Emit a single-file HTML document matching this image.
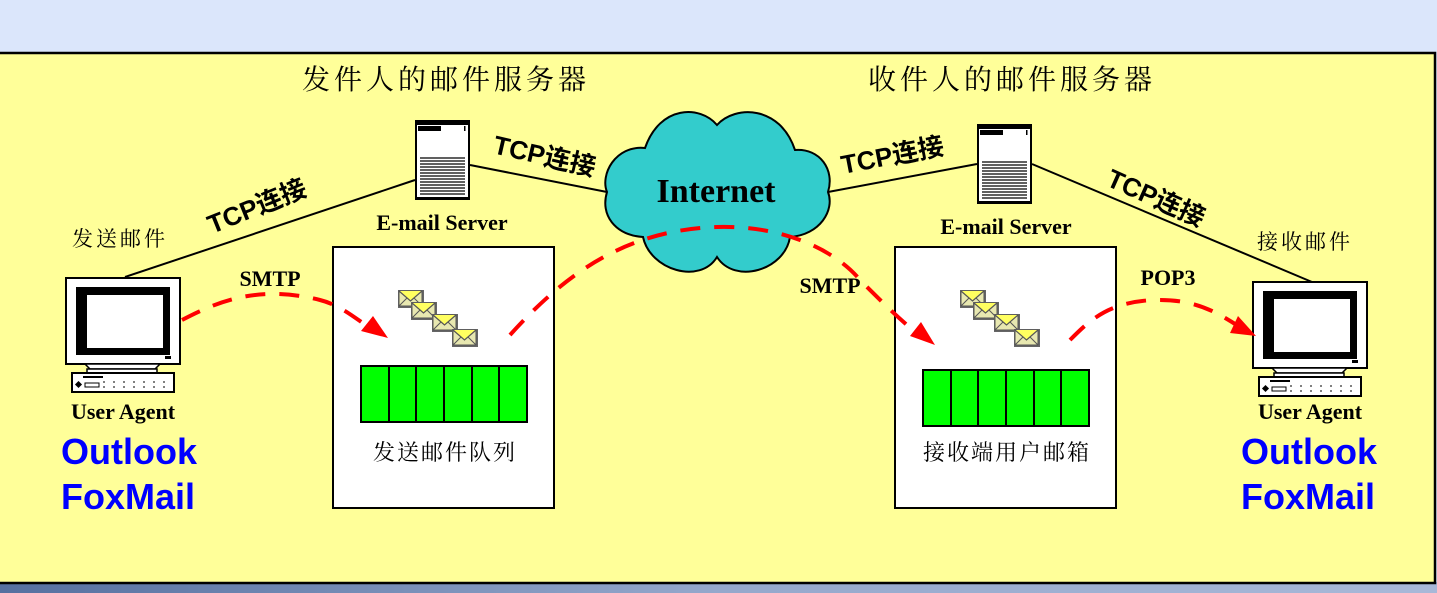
<!DOCTYPE html>
<html><head><meta charset="utf-8"><style>
html,body{margin:0;padding:0;width:1437px;height:593px;overflow:hidden;background:#dbe6fb}
svg{display:block}
</style></head><body>
<svg width="1437" height="593" viewBox="0 0 1437 593" xmlns="http://www.w3.org/2000/svg">
<defs>
<linearGradient id="bot" x1="0" y1="0" x2="1" y2="0"><stop offset="0" stop-color="#5670a0"/><stop offset="0.5" stop-color="#95a8cc"/><stop offset="1" stop-color="#a8b8d8"/></linearGradient>
<g id="comp">
 <rect x="1" y="1" width="114" height="86" fill="#fff" stroke="#000" stroke-width="2"/>
 <rect x="11" y="10" width="94" height="68" fill="#000"/>
 <rect x="22" y="18" width="76" height="53" fill="#fff"/>
 <rect x="100" y="79" width="6" height="3" fill="#000"/>
 <path d="M20 87 L95 87 L90 92 L25 92 Z" fill="#fff" stroke="#000" stroke-width="1.5"/>
 <rect x="22" y="92" width="70" height="4" fill="#fff" stroke="#000" stroke-width="1.5"/>
 <rect x="7" y="96" width="102" height="19" fill="#fff" stroke="#000" stroke-width="2"/>
 <rect x="18" y="99" width="20" height="2" fill="#000"/>
 <rect x="11" y="105" width="5" height="5" fill="#000" transform="rotate(45 13.5 107.5)"/>
 <rect x="20" y="106" width="14" height="4" fill="#fff" stroke="#000" stroke-width="1"/>
 <path d="M38 105h68M38 110h68" stroke="#000" stroke-width="1" stroke-dasharray="2 8"/>
</g>
<g id="srv">
 <rect x="1" y="1" width="53" height="78" fill="#fff" stroke="#000" stroke-width="2"/>
 <rect x="2" y="2" width="51" height="3" fill="#000"/>
 <rect x="3" y="6" width="23" height="5" fill="#000"/>
 <rect x="49" y="6" width="1.5" height="5" fill="#000"/>
 <g stroke="#000" stroke-width="1.3">
  <path d="M5 38h45M5 41h45M5 44h45M5 47h45M5 50h45M5 53h45M5 56h45M5 59h45M5 62h45M5 65h45M5 68h45M5 71h45M5 74h45"/>
 </g>
 <rect x="1" y="77" width="53" height="3" fill="#000"/>
</g>
<g id="env">
 <rect x="0" y="0" width="26" height="18" fill="#666"/>
 <rect x="1" y="1" width="23" height="15" fill="#e8e8b0" stroke="#555" stroke-width="1"/>
 <path d="M1 1 L12.5 11 L24 1" fill="#ffff60" stroke="#555" stroke-width="1.2"/>
 <path d="M1 16 L9 8 M24 16 L16 8" stroke="#555" stroke-width="1"/>
</g>
<g id="queue">
 <rect x="0" y="0" width="166" height="56" fill="#00ff00" stroke="#000" stroke-width="2"/>
 <path d="M28 0v56M55 0v56M83 0v56M111 0v56M138 0v56" stroke="#000" stroke-width="2"/>
</g>
</defs>

<rect x="0" y="0" width="1437" height="52" fill="#dbe6fb"/>
<rect x="0" y="582" width="1437" height="11" fill="url(#bot)"/>
<rect x="-2" y="53" width="1437" height="530" fill="#ffff99" stroke="#000" stroke-width="2.5"/>

<g font-family="'Liberation Serif','Noto Serif CJK SC',serif" font-size="28" fill="#000" letter-spacing="4">
 <text x="302" y="89">发件人的邮件服务器</text>
 <text x="868" y="89">收件人的邮件服务器</text>
</g>

<g stroke="#000" stroke-width="2" fill="none">
 <path d="M125 277 L415 180"/>
 <path d="M470 165 L607 192"/>
 <path d="M828 192 L977 164"/>
 <path d="M1032 164 L1312 282"/>
</g>

<path d="M717 125 C700 105 660 105 645 148 C615 145 600 175 607 192 C600 215 615 235 643 237 C650 270 700 285 717 257 C735 285 785 270 790 237 C820 235 835 210 828 192 C835 170 820 148 795 150 C780 105 735 105 717 125 Z" fill="#33cccc" stroke="#000" stroke-width="2"/>
<text x="716" y="202" text-anchor="middle" font-family="'Liberation Serif',serif" font-weight="bold" font-size="34">Internet</text>

<use href="#srv" x="415" y="120"/>
<use href="#srv" x="977" y="124"/>

<g font-family="'Liberation Serif',serif" font-weight="bold" font-size="22" text-anchor="middle">
 <text x="442" y="230">E-mail Server</text>
 <text x="1006" y="234">E-mail Server</text>
 <text x="123" y="419">User Agent</text>
 <text x="1310" y="419">User Agent</text>
 <text x="270" y="286">SMTP</text>
 <text x="830" y="293">SMTP</text>
 <text x="1168" y="285">POP3</text>
</g>

<g font-family="'Liberation Sans','Noto Sans CJK SC',sans-serif" font-weight="bold" font-size="26">
 <text transform="translate(212,234) rotate(-22)">TCP连接</text>
 <text transform="translate(492,153) rotate(13)">TCP连接</text>
 <text transform="translate(843,174) rotate(-11)">TCP连接</text>
 <text transform="translate(1105,185) rotate(24)">TCP连接</text>
</g>

<g font-family="'Liberation Serif','Noto Serif CJK SC',serif" font-size="21" letter-spacing="3">
 <text x="72" y="246">发送邮件</text>
 <text x="1257" y="249">接收邮件</text>
</g>

<rect x="333" y="247" width="221" height="261" fill="#fff" stroke="#000" stroke-width="2"/>
<rect x="895" y="247" width="221" height="261" fill="#fff" stroke="#000" stroke-width="2"/>
<use href="#queue" x="361" y="366"/>
<use href="#queue" x="923" y="370"/>
<g font-family="'Liberation Serif','Noto Serif CJK SC',serif" font-size="22" letter-spacing="2">
 <text x="373" y="460">发送邮件队列</text>
 <text x="923" y="460">接收端用户邮箱</text>
</g>
<use href="#env" x="398" y="290"/><use href="#env" x="411" y="302"/><use href="#env" x="432" y="314"/><use href="#env" x="452" y="329"/>
<use href="#env" x="960" y="290"/><use href="#env" x="973" y="302"/><use href="#env" x="994" y="314"/><use href="#env" x="1014" y="329"/>

<use href="#comp" x="65" y="277"/>
<use href="#comp" x="1252" y="281"/>

<g font-family="'Liberation Sans',sans-serif" font-weight="bold" font-size="36" fill="#0000ff">
 <text x="61" y="464">Outlook</text>
 <text x="61" y="509">FoxMail</text>
 <text x="1241" y="464">Outlook</text>
 <text x="1241" y="509">FoxMail</text>
</g>

<g stroke="#ff0000" stroke-width="4" fill="none" stroke-dasharray="20 14">
 <path d="M182 320 C220 300 260 285 320 300 C340 305 355 318 370 328"/>
 <path d="M510 335 C560 280 620 230 717 227 C790 225 840 255 860 280 C880 300 895 315 915 332"/>
 <path d="M1070 340 C1090 320 1110 300 1160 300 C1200 300 1220 315 1240 327"/>
</g>
<g fill="#ff0000">
 <path d="M388 338 L361 331 L373 316 Z"/>
 <path d="M935 345 L910 336 L921 322 Z"/>
 <path d="M1256 336 L1230 333 L1238 316 Z"/>
</g>
</svg>
</body></html>
